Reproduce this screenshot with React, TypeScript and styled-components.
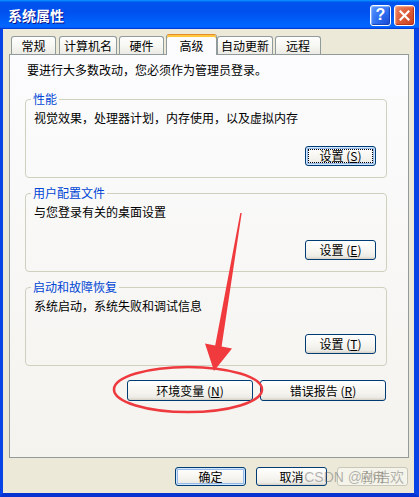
import styled, { createGlobalStyle } from "styled-components";

const GlobalStyle = createGlobalStyle`
  html, body {
    margin: 0;
    padding: 0;
  }
  body {
    width: 419px;
    height: 497px;
    overflow: hidden;
    font-family: "Noto Sans CJK SC", "Noto Sans", sans-serif;
    font-size: 12px;
    color: #000;
  }
  * {
    box-sizing: border-box;
  }
`;

type TabInfo = { label: string; width: number; gap: number; active?: boolean };

const tabs: TabInfo[] = [
  { label: "常规", width: 45, gap: 0 },
  { label: "计算机名", width: 58, gap: 3 },
  { label: "硬件", width: 45, gap: 2 },
  { label: "高级", width: 51, gap: 2, active: true },
  { label: "自动更新", width: 56, gap: 0 },
  { label: "远程", width: 46, gap: 2 },
];

type GroupInfo = { title: string; text: string; key: string };

const groups: GroupInfo[] = [
  { title: "性能", text: "视觉效果，处理器计划，内存使用，以及虚拟内存", key: "S" },
  { title: "用户配置文件", text: "与您登录有关的桌面设置", key: "E" },
  { title: "启动和故障恢复", text: "系统启动，系统失败和调试信息", key: "T" },
];

export default function App() {
  return (
    <>
      <GlobalStyle />
      <Window>
        <TitleBar>
          <Title>系统属性</Title>
          <CaptionButtons>
            <HelpButton>?</HelpButton>
            <CloseButton>
              <svg width="11" height="11" viewBox="0 0 11 11">
                <path
                  d="M1.5 1.5 L9.5 9.5 M9.5 1.5 L1.5 9.5"
                  stroke="#fff"
                  strokeWidth="2.2"
                  strokeLinecap="square"
                />
              </svg>
            </CloseButton>
          </CaptionButtons>
        </TitleBar>

        <Body>
          <TabStrip>
            {tabs.map((t) => (
              <Tab key={t.label} $width={t.width} $gap={t.gap} $active={t.active}>
                {t.label}
              </Tab>
            ))}
          </TabStrip>

          <Panel>
            <Intro>要进行大多数改动，您必须作为管理员登录。</Intro>
            <Groups>
              {groups.map((g, i) => (
                <Group key={g.title}>
                  <Legend>{g.title}</Legend>
                  <Description>{g.text}</Description>
                  <GroupActions>
                    <Button $width={71} $height={20} $focused={i === 0}>
                      设置 (<u>{g.key}</u>)
                    </Button>
                  </GroupActions>
                </Group>
              ))}
            </Groups>
            <ExtraActions>
              <Button $width={126} $height={21}>
                环境变量 (<u>N</u>)
              </Button>
              <Button $width={126} $height={21}>
                错误报告 (<u>R</u>)
              </Button>
            </ExtraActions>
          </Panel>

          <Footer>
            <Button $width={71} $height={19} $default>
              确定
            </Button>
            <Button $width={71} $height={19}>
              取消
            </Button>
            <Button $width={71} $height={19} disabled>
              应用
            </Button>
            <Watermark>CSDN @孙浩欢</Watermark>
          </Footer>
        </Body>

        <Annotation width="419" height="497" viewBox="0 0 419 497">
          <polygon
            points="240.3,212.9 241.7,213.1 221.6,346.6 232,348.6 214,371 205,343.6 215.2,345.6"
            fill="#F03A3D"
          />
          <ellipse
            cx="188"
            cy="389.5"
            rx="74"
            ry="22.5"
            fill="none"
            stroke="#EE3A3F"
            strokeWidth="2.6"
          />
        </Annotation>
      </Window>
    </>
  );
}

const Window = styled.div`
  position: relative;
  width: 419px;
  height: 497px;
  display: flex;
  flex-direction: column;
`;

const TitleBar = styled.div`
  height: 29px;
  flex-shrink: 0;
  display: flex;
  align-items: center;
  justify-content: space-between;
  padding: 0 4px 0 8px;
  background: linear-gradient(
    180deg,
    #0997ff,
    #0053ee 8%,
    #0050ee 40%,
    #0066ff 88%,
    #0066ff 93%,
    #005bff 95%,
    #003dd7 96%,
    #003dd7
  );
`;

const Title = styled.span`
  color: #fff;
  font-size: 14px;
  font-weight: bold;
  text-shadow: 1px 1px #0f1089;
  line-height: 16px;
`;

const CaptionButtons = styled.div`
  display: flex;
  gap: 3px;
  margin-top: 1px;
`;

const CaptionButton = styled.div`
  width: 21px;
  height: 21px;
  border: 1px solid #fff;
  border-radius: 3px;
  display: flex;
  align-items: center;
  justify-content: center;
`;

const HelpButton = styled(CaptionButton)`
  background: radial-gradient(circle at 90% 90%, #1c4fd8 0%, #2d6df0 45%, #5b97ff 100%);
  box-shadow: inset -1px -1px 1px #1741b7, inset 1px 1px 1px #8fb6ff;
  color: #fff;
  font-family: "Liberation Sans", Arial, sans-serif;
  font-weight: bold;
  font-size: 16px;
  line-height: 1;
`;

const CloseButton = styled(CaptionButton)`
  background: radial-gradient(circle at 90% 90%, #cc4625 0%, #dc5b35 50%, #f08c6c 100%);
  box-shadow: inset -1px -1px 1px #b33418, inset 1px 1px 1px #f5ab8e;
`;

const Body = styled.div`
  flex: 1;
  display: flex;
  flex-direction: column;
  background: #ece9d8;
  border-left: 3px solid #0843e6;
  border-right: 5px solid #0843e6;
  border-bottom: 4px solid #0633d0;
  padding: 5px 5px 7px 6px;
`;

const TabStrip = styled.div`
  position: relative;
  z-index: 1;
  height: 21px;
  display: flex;
  align-items: flex-end;
  padding-left: 2px;
`;

const Tab = styled.div<{ $width: number; $gap: number; $active?: boolean }>`
  width: ${(p) => p.$width}px;
  height: ${(p) => (p.$active ? 21 : 18)}px;
  margin-left: ${(p) => p.$gap}px;
  margin-bottom: ${(p) => (p.$active ? 0 : 1)}px;
  border: 1px solid #919b9c;
  border-bottom: none;
  border-top-color: ${(p) => (p.$active ? "#e68b2c" : "#919b9c")};
  border-radius: 3px 3px 0 0;
  background: ${(p) =>
    p.$active
      ? "#fcfcfe"
      : "linear-gradient(180deg, #fefefe 0%, #f7f7f3 50%, #ecebe5 100%)"};
  box-shadow: ${(p) => (p.$active ? "inset 0 2px 0 #ffc73c" : "none")};
  display: flex;
  align-items: center;
  justify-content: center;
  padding-top: 1px;
  line-height: 14px;
  white-space: nowrap;
`;

const Panel = styled.div`
  flex: 1;
  margin-top: -1px;
  border: 1px solid #919b9c;
  background: linear-gradient(180deg, #fcfcfe 0%, #f4f3ee 100%);
  padding: 8px 21px 0 15px;
  display: flex;
  flex-direction: column;
`;

const Intro = styled.div`
  margin: 0 0 15px 2px;
  line-height: 14px;
  white-space: nowrap;
`;

const Groups = styled.div`
  display: flex;
  flex-direction: column;
  gap: 8px;
`;

const Group = styled.fieldset`
  margin: 0;
  min-width: 0;
  border: 1px solid #d0d0bf;
  border-radius: 4px;
  padding: 0 10px 11px 8px;
`;

const Legend = styled.legend`
  padding: 0 2px;
  margin-left: -3px;
  color: #0046d5;
  font-size: 12px;
  line-height: 14px;
`;

const Description = styled.div`
  margin-top: 5px;
  line-height: 14px;
  white-space: nowrap;
`;

const GroupActions = styled.div`
  display: flex;
  justify-content: flex-end;
  margin-top: 21px;
`;

const ExtraActions = styled.div`
  display: flex;
  justify-content: flex-end;
  gap: 7px;
  margin-top: 14px;
  padding-right: 1px;
`;

const Button = styled.button<{
  $width: number;
  $height: number;
  $focused?: boolean;
  $default?: boolean;
}>`
  position: relative;
  width: ${(p) => p.$width}px;
  height: ${(p) => p.$height}px;
  padding: 0;
  border: 1px solid #003c74;
  border-radius: 3px;
  background: linear-gradient(180deg, #ffffff 0%, #f5f4ef 60%, #ecebe6 86%, #d6d0c5 100%);
  font-family: "Noto Sans CJK SC", "Noto Sans", sans-serif;
  font-size: 12px;
  line-height: 14px;
  color: #000;
  display: flex;
  align-items: center;
  justify-content: center;
  white-space: pre;
  box-shadow: ${(p) =>
    p.$focused || p.$default
      ? "inset 0 0 0 1px #cee7ff, inset 0 0 0 2px #98b8ea"
      : "none"};

  u {
    text-decoration: underline;
    text-underline-offset: 1px;
  }

  &::after {
    content: "";
    display: ${(p) => (p.$focused ? "block" : "none")};
    position: absolute;
    inset: 2px;
    border: 1px dotted #000;
  }

  &:disabled {
    border-color: #c9c7ba;
    background: #f5f4ea;
    color: #aca899;
    box-shadow: none;
  }
`;

const Footer = styled.div`
  position: relative;
  display: flex;
  justify-content: flex-end;
  gap: 10px;
  margin-top: 9px;
  padding-right: 1px;
`;

const Watermark = styled.span`
  position: absolute;
  right: 5px;
  top: 0;
  line-height: 20px;
  font-family: "Liberation Sans", "Noto Sans CJK SC", sans-serif;
  font-size: 14px;
  color: rgba(110, 110, 110, 0.5);
  pointer-events: none;
  white-space: nowrap;
`;

const Annotation = styled.svg`
  position: absolute;
  left: 0;
  top: 0;
  pointer-events: none;
`;
